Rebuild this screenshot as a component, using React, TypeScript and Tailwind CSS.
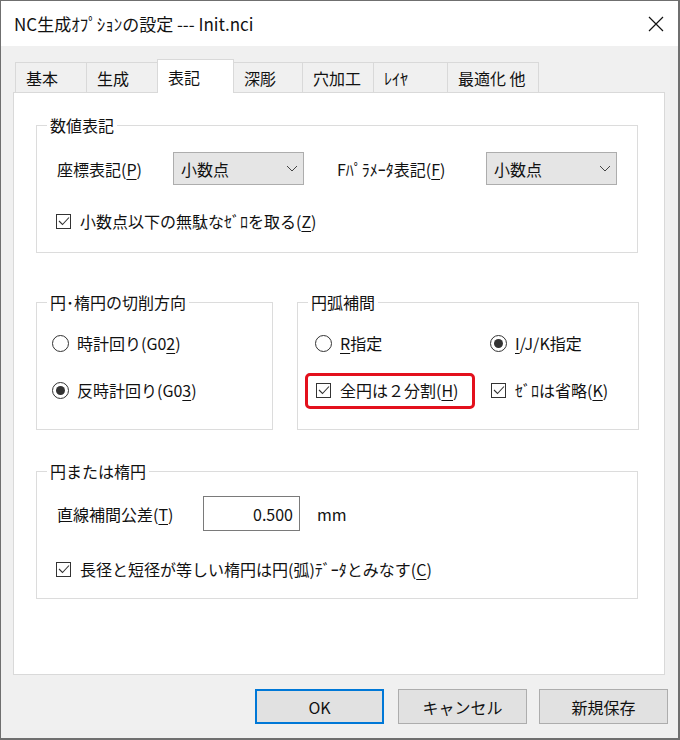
import type { ReactNode } from 'react';

const U = ({ c }: { c: string }) => (
  <span className="underline decoration-1 underline-offset-[3px]">{c}</span>
);

const CheckBox = () => (
  <span className="flex w-[17px] shrink-0 justify-center">
    <span className="flex h-[15px] w-[15px] items-center justify-center border border-[#333333] bg-white">
      <svg width="12" height="10" viewBox="0 0 12 10">
        <polyline points="1,5 4.5,8.5 11,1.5" fill="none" stroke="#333333" strokeWidth="1.1" />
      </svg>
    </span>
  </span>
);

const Radio = ({ on }: { on?: boolean }) => (
  <span className="flex h-[17px] w-[17px] shrink-0 items-center justify-center rounded-full border border-[#333333] bg-white">
    {on && <span className="h-[9px] w-[9px] rounded-full bg-[#333333]" />}
  </span>
);

const Option = ({ children, kind, on }: { children: ReactNode; kind: 'radio' | 'check'; on?: boolean }) => (
  <div className="flex h-[20px] items-center gap-[8px]">
    {kind === 'radio' ? <Radio on={on} /> : <CheckBox />}
    <span className="whitespace-nowrap">{children}</span>
  </div>
);

const Group = ({ label, className, children }: { label: string; className: string; children: ReactNode }) => (
  <div className={`relative shrink-0 border border-[#dcdcdc] ${className}`}>
    <span className="absolute -top-[11px] left-[10px] bg-white px-[3px] leading-[20px]">{label}</span>
    {children}
  </div>
);

const Combo = () => (
  <div className="flex h-[33px] w-[131px] shrink-0 items-center justify-between border border-[#adadad] bg-[#e5e5e5] pl-[7px] pr-[5px]">
    <span>小数点</span>
    <svg width="12" height="7" viewBox="0 0 12 7">
      <polyline points="1,1 6,6 11,1" fill="none" stroke="#444444" strokeWidth="1" />
    </svg>
  </div>
);

const tabs = [
  { t: '基本', w: 'w-[72px]' },
  { t: '生成', w: 'w-[72px]' },
  { t: '表記', w: 'w-[77px]', on: true },
  { t: '深彫', w: 'w-[70px]' },
  { t: '穴加工', w: 'w-[72px]' },
  { t: 'ﾚｲﾔ', w: 'w-[75px]' },
  { t: '最適化 他', w: 'w-[92px]' },
];

const App = () => {
  return (
    <div className="h-[740px] w-[680px] overflow-hidden border-t border-l border-r-2 border-b-2 border-[#6f6f6f] bg-[#f0f0f0] font-['Noto_Sans_CJK_JP','Noto_Sans',sans-serif] text-[16px] leading-[20px] text-[#111111]">
      {/* title bar */}
      <div className="flex h-[45px] items-center justify-between bg-white pl-[13px] pr-[14px]">
        <span className="text-[17px]">NC生成ｵﾌﾟｼｮﾝの設定 --- Init.nci</span>
        <svg width="16" height="16" viewBox="0 0 16 16">
          <path d="M1 1 L15 15 M15 1 L1 15" stroke="#111111" strokeWidth="1.2" fill="none" />
        </svg>
      </div>

      {/* tabs */}
      <div className="relative z-10 -mb-px flex h-[47px] items-end pl-[14px]">
        {tabs.map((tab, i) => (
          <div
            key={tab.t}
            className={`flex shrink-0 items-center border border-[#d9d9d9] pl-[10px] ${tab.w} ${i > 0 ? '-ml-px' : ''} ${
              tab.on ? 'relative z-10 h-[34px] border-b-0 bg-white' : 'h-[31px] bg-[#f0f0f0]'
            }`}
          >
            {tab.t}
          </div>
        ))}
      </div>

      {/* panel */}
      <div className="ml-[12px] flex h-[583px] w-[652px] flex-col border border-[#d9d9d9] bg-white pl-[22px]">
        <Group label="数値表記" className="mt-[32px] h-[128px] w-[602px]">
          <div className="flex items-center pl-[20px] pt-[26px]">
            <span className="w-[116px] shrink-0 whitespace-nowrap">
              座標表記(<U c="P" />)
            </span>
            <Combo />
            <span className="ml-[33px] w-[149px] shrink-0 whitespace-nowrap">
              Fﾊﾟﾗﾒｰﾀ表記(<U c="F" />)
            </span>
            <Combo />
          </div>
          <div className="mt-[26px] pl-[18px]">
            <Option kind="check">
              小数点以下の無駄なｾﾞﾛを取る(<U c="Z" />)
            </Option>
          </div>
        </Group>

        <div className="mt-[49px] flex gap-[24px]">
          <Group label="円･楕円の切削方向" className="h-[128px] w-[237px]">
            <div className="flex flex-col gap-[27px] pl-[15px] pt-[30px]">
              <Option kind="radio">
                時計回り(G0<U c="2" />)
              </Option>
              <Option kind="radio" on>
                反時計回り(G0<U c="3" />)
              </Option>
            </div>
          </Group>
          <Group label="円弧補間" className="h-[128px] w-[342px]">
            <div className="grid grid-cols-[175px_1fr] gap-y-[27px] pl-[17px] pt-[30px]">
              <Option kind="radio">
                <U c="R" />指定
              </Option>
              <Option kind="radio" on>
                <U c="I" />/J/K指定
              </Option>
              <div className="relative">
                <span className="pointer-events-none absolute -top-[7px] -left-[10px] h-[36px] w-[170px] rounded-[5px] border-[3px] border-[#e3101c]" />
                <Option kind="check">
                  全円は２分割(<U c="H" />)
                </Option>
              </div>
              <Option kind="check">
                ｾﾞﾛは省略(<U c="K" />)
              </Option>
            </div>
          </Group>
        </div>

        <Group label="円または楕円" className="mt-[41px] h-[128px] w-[602px]">
          <div className="flex items-center pl-[20px] pt-[24px]">
            <span className="w-[146px] shrink-0 whitespace-nowrap">
              直線補間公差(<U c="T" />)
            </span>
            <div className="flex h-[35px] w-[97px] shrink-0 items-center justify-end border border-[#7a7a7a] bg-white pr-[6px]">
              0.500
            </div>
            <span className="ml-[17px]">mm</span>
          </div>
          <div className="mt-[28px] pl-[18px]">
            <Option kind="check">
              長径と短径が等しい楕円は円(弧)ﾃﾞｰﾀとみなす(<U c="C" />)
            </Option>
          </div>
        </Group>
      </div>

      {/* buttons */}
      <div className="mt-[14px] flex justify-end pr-[10px]">
        <button className="flex h-[35px] w-[129px] items-center justify-center border-2 border-[#0078d7] bg-[#e1e1e1]">
          OK
        </button>
        <button className="ml-[14px] flex h-[35px] w-[129px] items-center justify-center border border-[#adadad] bg-[#e1e1e1]">
          キャンセル
        </button>
        <button className="ml-[12px] flex h-[35px] w-[129px] items-center justify-center border border-[#adadad] bg-[#e1e1e1]">
          新規保存
        </button>
      </div>
    </div>
  );
};

export default App;
